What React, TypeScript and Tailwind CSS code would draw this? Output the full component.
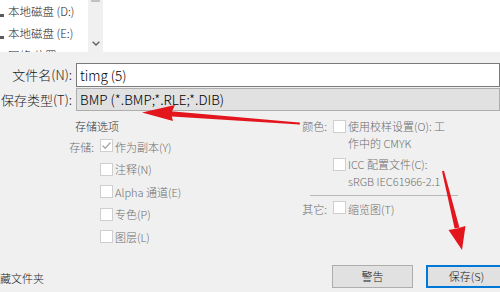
const disabledText = "text-[#6d6d6d]";

function Box({ checked = false }: { checked?: boolean }) {
  return (
    <span className="relative inline-block h-[13px] w-[13px] shrink-0 border border-[#cfcfcf] bg-white">
      {checked && (
        <svg viewBox="0 0 13 13" className="absolute -left-px -top-px h-[13px] w-[13px]">
          <path d="M2.5 6.5 L5.2 9.2 L10.5 3.5" fill="none" stroke="#a8a8a8" strokeWidth="1.3" />
        </svg>
      )}
    </span>
  );
}

function NavRow({ label }: { label: string }) {
  return (
    <div className="flex h-[22px] items-center">
      <span className="mt-[6px] h-[3px] w-[4px] bg-[#5a5a5a]" />
      <span className="ml-[4px] whitespace-nowrap text-[11.5px] text-[#1a1a1a]">{label}</span>
    </div>
  );
}

function Arrows() {
  return (
    <svg className="pointer-events-none absolute inset-0" width="500" height="292" viewBox="0 0 500 292">
      {/* arrow pointing at the file type */}
      <polygon points="168,111 299,122.6 299.4,124.6 168,116.2" fill="#e3161d" />
      <circle cx="299" cy="123.6" r="1" fill="#e3161d" />
      <polygon points="142,112.5 175,105 171,113.5 173,121" fill="#e3161d" />
      {/* arrow pointing at save */}
      <polygon points="442,171.2 444,170.8 459.4,227.4 454.6,228.6" fill="#e3161d" />
      <polygon points="462,250 448.5,230 457,228.5 465.5,226" fill="#e3161d" />
    </svg>
  );
}

export default function App() {
  return (
    <div className="relative flex h-[292px] w-[500px] flex-col overflow-hidden bg-[#f0f0f0] font-['Noto_Sans_CJK_SC',sans-serif] font-light text-black">
      {/* nav pane + file list */}
      <div className="flex h-[52px] shrink-0 overflow-hidden bg-white">
        <div className="w-[88px] pt-px">
          <NavRow label="本地磁盘 (D:)" />
          <NavRow label="本地磁盘 (E:)" />
          <NavRow label="网络 位置" />
        </div>
        <div className="flex w-[15px] flex-col items-center bg-[#f0f0f0]">
          <div className="h-[2px] w-[9px] bg-[#c2c2c2]" />
          <svg viewBox="0 0 8 5" className="mt-[39px] h-[5px] w-[8px]">
            <path d="M0.7 0.7 L4 4 L7.3 0.7" fill="none" stroke="#606060" strokeWidth="1.4" />
          </svg>
        </div>
        <div className="flex-1" />
      </div>

      {/* file name + type */}
      <div className="mt-[11px] flex h-[24px] items-center">
        <span className="w-[74px] whitespace-nowrap pr-[2px] text-right text-[13px] text-[#1a1a1a]">文件名(N):</span>
        <div className="ml-[2px] flex h-full flex-1 items-center border border-[#7a7a7a] bg-white pl-[3px] text-[13.5px]">
          timg (5)
        </div>
      </div>
      <div className="mt-px flex h-[23px] items-center">
        <span className="w-[74px] whitespace-nowrap pr-[2px] text-right text-[13px] text-[#1a1a1a]">保存类型(T):</span>
        <div className="ml-[2px] flex h-full flex-1 items-center border border-[#adadad] bg-[#e1e1e1] pl-[3px] text-[13.5px]">
          BMP (*.BMP;*.RLE;*.DIB)
        </div>
      </div>

      {/* save options */}
      <div className="mt-[5px] flex whitespace-nowrap text-[11px]">
        <div className="ml-[68px] w-[232px]">
          <div className="flex h-[20px] items-center pl-[7px] text-[#333333]">存储选项</div>
          <div className="flex h-[22px] items-center">
            <span className={`w-[26px] text-right ${disabledText}`}>存储:</span>
            <span className="ml-[6px]"><Box checked /></span>
            <span className={`ml-[2px] ${disabledText}`}>作为副本(Y)</span>
          </div>
          {["注释(N)", "Alpha 通道(E)", "专色(P)", "图层(L)"].map((t) => (
            <div key={t} className="flex h-[22.5px] items-center pl-[32px]">
              <Box />
              <span className={`ml-[2px] ${disabledText}`}>{t}</span>
            </div>
          ))}
        </div>

        <div className="w-[200px] pt-[1.5px]">
          <div className="flex items-start leading-[17px]">
            <span className={`w-[27px] text-right ${disabledText}`}>颜色:</span>
            <span className="ml-[6px] mt-[2px]"><Box /></span>
            <span className={`ml-[2px] w-[104px] whitespace-normal ${disabledText}`}>使用校样设置(O): 工作中的 CMYK</span>
          </div>
          <div className="mt-[4px] flex items-start pl-[33px] leading-[17px]">
            <span className="mt-[2px]"><Box /></span>
            <span className={`ml-[2px] w-[104px] whitespace-normal ${disabledText}`}>ICC 配置文件(C): sRGB IEC61966-2.1</span>
          </div>
          <div className="ml-[10px] mt-[5.5px] h-px w-[148px] bg-[#b9b9b9]" />
          <div className="mt-[5px] flex h-[17px] items-center">
            <span className={`w-[27px] text-right ${disabledText}`}>其它:</span>
            <span className="ml-[6px]"><Box /></span>
            <span className={`ml-[2px] ${disabledText}`}>缩览图(T)</span>
          </div>
        </div>
      </div>

      {/* footer */}
      <div className="mb-[4px] mr-[-7px] mt-auto flex h-[23px] items-center text-[11px]">
        <span className="ml-[-11px] mt-[3px] whitespace-nowrap text-[#1a1a1a]">隐藏文件夹</span>
        <div className="flex-1" />
        <button className="h-full w-[81px] border border-[#adadad] bg-[#e1e1e1] font-light text-[#1a1a1a]">警告</button>
        <button className="ml-[13px] h-full w-[81px] border-2 border-[#0078d7] bg-[#e1e1e1] font-light text-[#1a1a1a]">保存(S)</button>
      </div>

      <Arrows />
    </div>
  );
}
